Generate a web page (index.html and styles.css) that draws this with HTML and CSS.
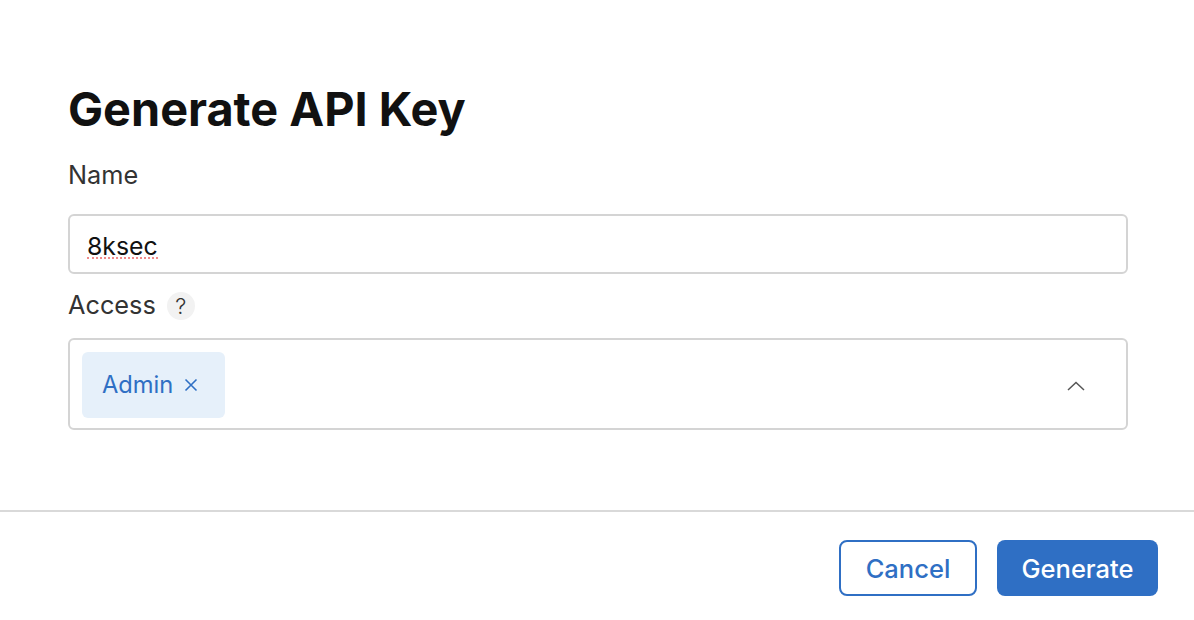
FILE: index.html
```html
<!DOCTYPE html>
<html lang="en">

<head>
    <meta charset="UTF-8">
    <meta name="viewport" content="width=device-width, initial-scale=1.0">
    <title>Generate API Key</title>
    <link rel="stylesheet" href="styles.css">
</head>

<body>
    <main class="dialog">
        <div class="content">
            <h1>Generate API Key</h1>

            <label class="label label-name">Name</label>
            <div class="input"><span class="misspelled">8ksec</span></div>

            <div class="label label-access">
                Access
                <span class="help">?</span>
            </div>
            <div class="select">
                <span class="tag">
                    Admin
                    <svg class="tag-x" width="14" height="14" viewBox="0 0 14 14">
                        <path d="M1.5 1.5 L12.5 12.5 M12.5 1.5 L1.5 12.5" />
                    </svg>
                </span>
                <svg class="chevron" width="18" height="10" viewBox="0 0 18 10">
                    <path d="M1 9 L9 1.5 L17 9" />
                </svg>
            </div>
        </div>

        <footer class="footer">
            <button class="btn btn-outline">Cancel</button>
            <button class="btn btn-primary">Generate</button>
        </footer>
    </main>
</body>

</html>
```

FILE: styles.css
```css
* {
    box-sizing: border-box;
}

html,
body {
    margin: 0;
    height: 100%;
    overflow: hidden;
    background-color: #fff;
}

body {
    font-family: Inter, "Noto Sans", sans-serif;
    color: #333;
}

.dialog {
    width: 1194px;
    height: 620px;
}

.content {
    height: 512px;
    padding: 78px 66px 0 68px;
    border-bottom: 2px solid #d9d9d9;
}

h1 {
    margin: 0;
    font-size: 46.8px;
    line-height: 62px;
    font-weight: 700;
    color: #111;
}

.label {
    display: flex;
    align-items: center;
    font-size: 25.3px;
    line-height: 30px;
    color: #333;
}

.label-name {
    margin-top: 20px;
    margin-bottom: 24px;
}

.label-access {
    margin-top: 16px;
    margin-bottom: 18px;
}

.help {
    display: flex;
    justify-content: center;
    align-items: center;
    width: 28px;
    height: 28px;
    margin-top: 2px;
    margin-left: 11px;
    border-radius: 50%;
    background-color: #f2f2f2;
    font-size: 22px;
    font-weight: 300;
}

.input {
    display: flex;
    align-items: center;
    height: 60px;
    padding: 6px 17px 0;
    border: 2px solid #d4d4d4;
    border-radius: 6px;
    font-size: 24.8px;
    color: #111;
}

.misspelled {
    line-height: 22px;
    border-bottom: 2px dotted #f08a8a;
}

.select {
    display: flex;
    justify-content: space-between;
    align-items: center;
    height: 92px;
    padding: 2px 41px 0 12px;
    border: 2px solid #d4d4d4;
    border-radius: 6px;
}

.tag {
    display: flex;
    align-items: center;
    gap: 11px;
    width: 143px;
    height: 66px;
    padding-bottom: 2px;
    padding-left: 20px;
    border-radius: 6px;
    background-color: #e6f0fa;
    font-size: 23.7px;
    color: #2f6fc4;
}

.tag-x {
    margin-top: 2px;
}

.tag-x path {
    fill: none;
    stroke: #2f6fc4;
    stroke-width: 1.6;
}

.chevron {
    margin-top: 2px;
}

.chevron path {
    fill: none;
    stroke: #555;
    stroke-width: 1.5;
}

.footer {
    display: flex;
    justify-content: flex-end;
    gap: 20px;
    padding: 28px 36px 0 0;
}

.btn {
    height: 56px;
    border-radius: 8px;
    font-family: inherit;
    font-size: 25.5px;
    font-weight: 500;
    cursor: pointer;
}

.btn-outline {
    width: 138px;
    border: 2px solid #2f6fc4;
    background-color: #fff;
    color: #2f6fc4;
}

.btn-primary {
    width: 161px;
    border: 0;
    background-color: #2f6fc4;
    color: #fff;
}
```
